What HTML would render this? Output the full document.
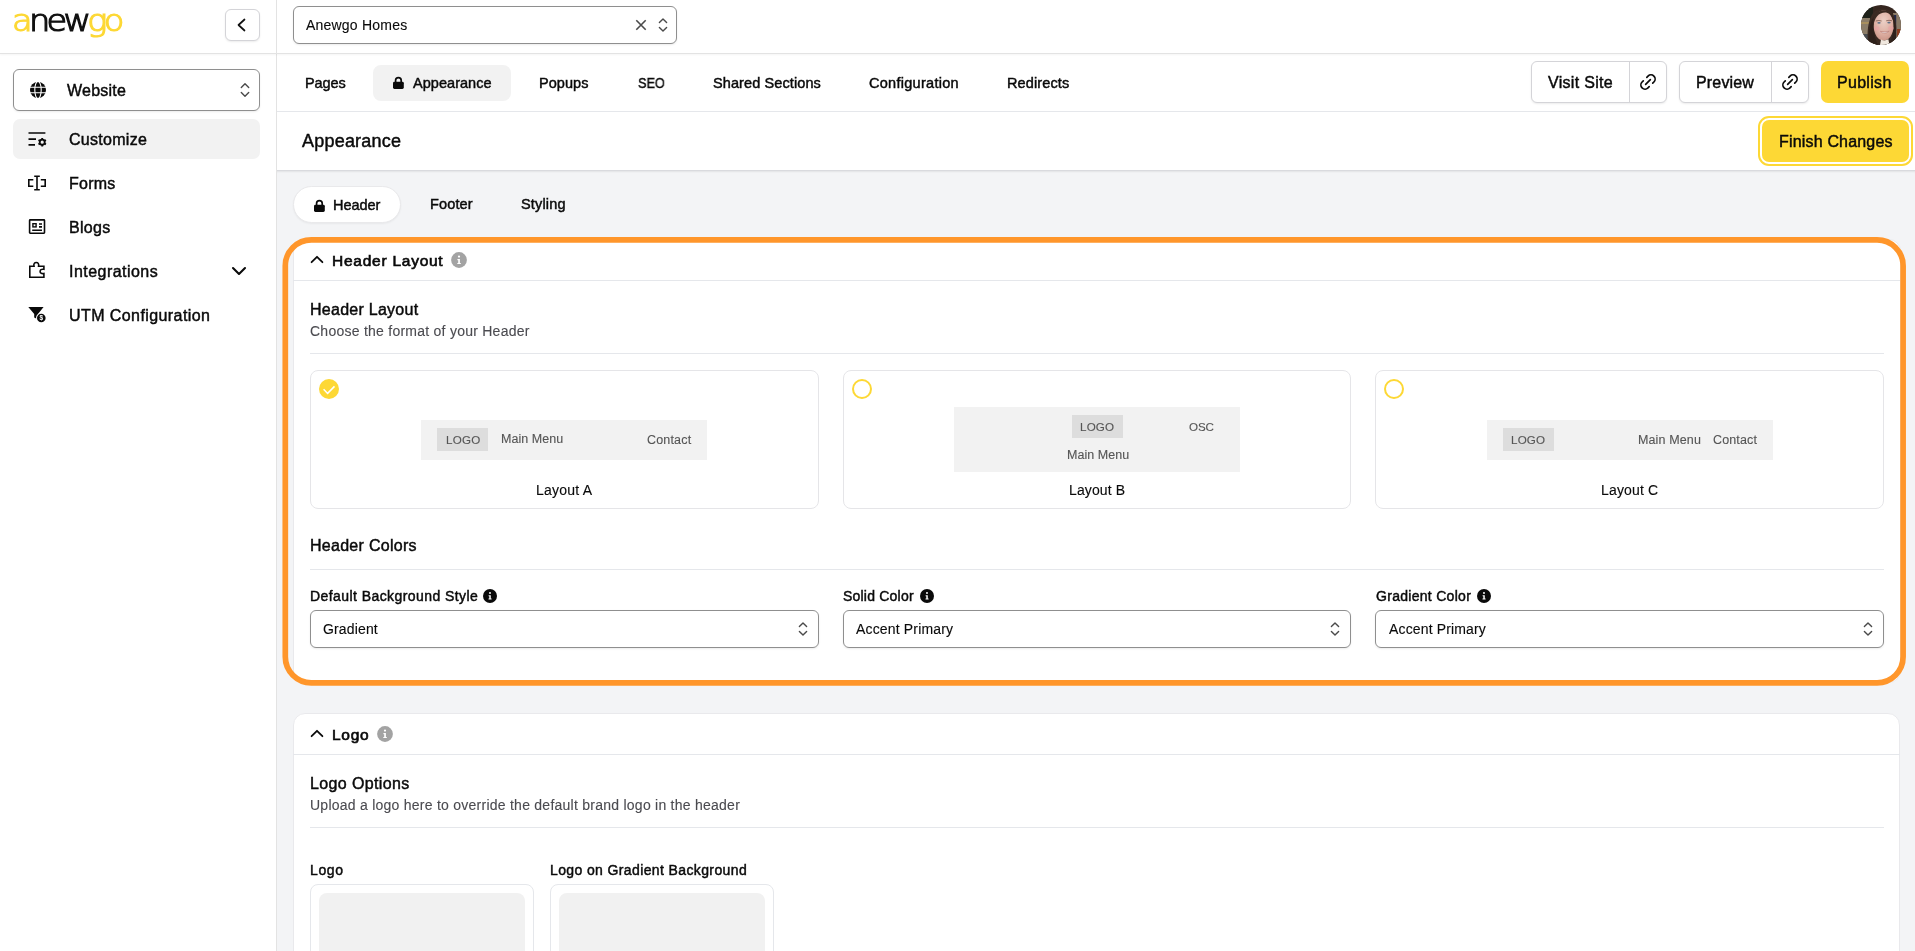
<!DOCTYPE html>
<html lang="en">
<head>
<meta charset="utf-8">
<title>Appearance</title>
<style>
*{box-sizing:border-box;margin:0;padding:0}
html,body{width:1915px;height:951px;overflow:hidden;background:#fff}
body{font-family:"Liberation Sans",sans-serif;color:#0a0a0a;font-size:15px;position:relative}
.abs{position:absolute}
.t{position:absolute;white-space:nowrap;line-height:1;will-change:transform;-webkit-text-stroke:0.12px currentColor}
.m{-webkit-text-stroke:0.45px currentColor}
.sb{-webkit-text-stroke:0.65px currentColor}
svg{position:absolute;overflow:visible}
/* structure */
#side{left:0;top:0;width:277px;height:951px;border-right:1px solid #e3e3e3;background:#fff}
#topline{left:0;top:53px;width:1915px;height:1px;background:#e3e3e3;box-shadow:0 1px 2px rgba(0,0,0,.06)}
#navline{left:277px;top:111px;width:1638px;height:1px;background:#e5e7eb}
#content{left:277px;top:170px;width:1638px;height:781px;background:#f3f4f6;border-top:1px solid #d9dade;box-shadow:inset 0 2px 2px -1px rgba(0,0,0,.07)}
.btn{position:absolute;background:#fff;border:1px solid #d4d4d8;border-radius:6px;box-shadow:0 1px 2px rgba(0,0,0,.08)}
.sel{position:absolute;background:#fff;border:1px solid #8f8f8f;border-radius:6px;box-shadow:0 1px 2px rgba(0,0,0,.08)}
.card{position:absolute;background:#fff;border-radius:12px;border:1px solid #e9e9ec}
.hr{position:absolute;height:1px;background:#e5e7eb}
.opt{position:absolute;border:1px solid #e5e5e8;border-radius:8px;background:#fff;top:370px;width:509px;height:139px}
.mock{position:absolute;background:#f2f2f2}
.lg{position:absolute;background:#dedede;color:#555;font-size:12px;text-align:center}
.mk{position:absolute;white-space:nowrap;line-height:1;color:#555;font-size:12.5px}
.rad{position:absolute;width:20px;height:20px;border-radius:50%;border:2px solid #fdd835;background:#fff}
</style>
</head>
<body>
<div id="side" class="abs"></div>
<div id="content" class="abs"></div>
<div id="topline" class="abs"></div>
<div id="navline" class="abs"></div>

<!-- SIDEBAR -->
<div id="logo" class="t" style="left:11.5px;top:1px;font-family:'DejaVu Sans Light','DejaVu Sans',sans-serif;font-weight:200;font-size:30px;letter-spacing:-3.3px;line-height:40px;-webkit-text-stroke:1.2px currentColor;transform:scaleX(1.12);transform-origin:0 0"><span style="color:#fdd835">a</span><span style="color:#111">new</span><span style="color:#fdd835">go</span></div>

<div class="btn" style="left:225px;top:9px;width:35px;height:32px"></div>
<svg style="left:236px;top:17px" width="12" height="16" viewBox="0 0 12 16"><path d="M8.5 2.5 L2.5 8 L8.5 13.5" fill="none" stroke="#111" stroke-width="1.7" stroke-linecap="round" stroke-linejoin="round"/></svg>

<div class="sel" style="left:13px;top:69px;width:247px;height:42px"></div>
<div class="t m" style="left:67px;top:83px;font-size:16px;letter-spacing:0.22px">Website</div>

<div class="abs" style="left:13px;top:119px;width:247px;height:40px;border-radius:7px;background:#f2f2f2"></div>
<div class="t m" style="left:69px;top:132px;font-size:16px;letter-spacing:0.28px">Customize</div>
<div class="t m" style="left:69px;top:176px;font-size:16px;letter-spacing:0.25px">Forms</div>
<div class="t m" style="left:69px;top:220px;font-size:16px;letter-spacing:0.29px">Blogs</div>
<div class="t m" style="left:69px;top:264px;font-size:16px;letter-spacing:0.46px">Integrations</div>
<div class="t m" style="left:69px;top:308px;font-size:16px;letter-spacing:0.42px">UTM Configuration</div>

<!-- TOP BAR -->
<div class="sel" style="left:293px;top:6px;width:384px;height:38px"></div>
<div class="t" style="left:306px;top:18px;font-size:14px;letter-spacing:0.21px">Anewgo Homes</div>

<!-- NAV -->
<div class="abs" style="left:373px;top:65px;width:138px;height:36px;border-radius:8px;background:#f2f2f2"></div>
<div class="t m" style="left:305px;top:76px;font-size:14.5px;letter-spacing:-0.11px">Pages</div>
<div class="t m" style="left:413px;top:76px;font-size:14.5px;letter-spacing:0.04px">Appearance</div>
<div class="t m" style="left:539px;top:76px;font-size:14.5px;letter-spacing:0.06px">Popups</div>
<div class="t m" style="left:637.5px;top:76px;font-size:14.5px;letter-spacing:0px;transform:scaleX(.875);transform-origin:0 0">SEO</div>
<div class="t m" style="left:713px;top:76px;font-size:14.5px;letter-spacing:0.10px">Shared Sections</div>
<div class="t m" style="left:869px;top:76px;font-size:14.5px;letter-spacing:0.28px">Configuration</div>
<div class="t m" style="left:1007px;top:76px;font-size:14.5px;letter-spacing:0.13px">Redirects</div>

<div class="btn" style="left:1531px;top:61px;width:136px;height:42px"></div>
<div class="abs" style="left:1629px;top:62px;width:1px;height:40px;background:#d4d4d8"></div>
<div class="t m" style="left:1548px;top:75px;font-size:16px;letter-spacing:0.30px">Visit Site</div>
<div class="btn" style="left:1679px;top:61px;width:130px;height:42px"></div>
<div class="abs" style="left:1771px;top:62px;width:1px;height:40px;background:#d4d4d8"></div>
<div class="t m" style="left:1696px;top:75px;font-size:16px;letter-spacing:0.16px">Preview</div>
<div class="abs" style="left:1821px;top:61px;width:88px;height:42px;border-radius:7px;background:#fdd835"></div>
<div class="t m" style="left:1837px;top:75px;font-size:16px;letter-spacing:0.30px">Publish</div>

<!-- TITLE ROW -->
<div class="t m" style="left:302px;top:132px;font-size:18px;letter-spacing:0.21px">Appearance</div>
<div class="abs" style="left:1758px;top:116px;width:155px;height:50px;border-radius:11px;border:2px solid #fdd835;background:#fff"></div>
<div class="abs" style="left:1762px;top:120px;width:147px;height:42px;border-radius:7px;background:#fdd835"></div>
<div class="t m" style="left:1779px;top:134px;font-size:16px;letter-spacing:0.18px">Finish Changes</div>

<!-- SUBTABS -->
<div class="abs" style="left:293px;top:186px;width:108px;height:37px;border-radius:19px;background:#fff;border:1px solid #e9e9eb;box-shadow:0 1px 2px rgba(0,0,0,.05)"></div>
<div class="t m" style="left:333px;top:198px;font-size:14.5px;letter-spacing:-0.06px">Header</div>
<div class="t m" style="left:430px;top:197px;font-size:14.5px;letter-spacing:0.14px">Footer</div>
<div class="t m" style="left:521px;top:197px;font-size:14.5px;letter-spacing:0.16px">Styling</div>

<!-- CARD 1 -->
<div class="card" style="left:293px;top:239px;width:1608px;height:444px"></div>
<svg style="left:0;top:0" width="1915" height="951"><rect x="285.3" y="239.8" width="1617.8" height="443" rx="26" ry="26" fill="none" stroke="#ff962b" stroke-width="5.7"/></svg>
<div class="t sb" style="left:332px;top:253px;font-size:15.5px;letter-spacing:0.75px">Header Layout</div>
<div class="hr" style="left:293px;top:280px;width:1607px"></div>
<div class="t m" style="left:310px;top:302px;font-size:16px;letter-spacing:0.26px">Header Layout</div>
<div class="t" style="left:310px;top:324px;font-size:14px;letter-spacing:0.25px;color:#4b4b50">Choose the format of your Header</div>
<div class="hr" style="left:310px;top:353px;width:1574px"></div>

<div class="opt" style="left:310px"></div>
<div class="opt" style="left:843px;width:508px"></div>
<div class="opt" style="left:1375px"></div>
<!-- layout A -->
<div class="mock" style="left:421px;top:420px;width:286px;height:40px"></div>
<div class="mock" style="left:437px;top:428px;width:51px;height:23px;background:#dddddd"></div>
<div class="t" style="left:446px;top:434px;font-size:11.6px;letter-spacing:0.25px;color:#555">LOGO</div>
<div class="t" style="left:501px;top:433px;font-size:12.5px;letter-spacing:0.05px;color:#555">Main Menu</div>
<div class="t" style="left:647px;top:434px;font-size:12.5px;letter-spacing:0.17px;color:#555">Contact</div>
<div class="t" style="left:536px;top:483px;font-size:14px;letter-spacing:0.23px">Layout A</div>
<!-- layout B -->
<div class="mock" style="left:954px;top:407px;width:286px;height:65px"></div>
<div class="mock" style="left:1072px;top:415px;width:51px;height:23px;background:#dddddd"></div>
<div class="t" style="left:1080px;top:421px;font-size:11.6px;letter-spacing:0.2px;color:#555">LOGO</div>
<div class="t" style="left:1189px;top:421px;font-size:11.6px;letter-spacing:-0.1px;color:#555">OSC</div>
<div class="t" style="left:1067px;top:449px;font-size:12.5px;letter-spacing:0.04px;color:#555">Main Menu</div>
<div class="t" style="left:1069px;top:483px;font-size:14px;letter-spacing:0.11px">Layout B</div>
<!-- layout C -->
<div class="mock" style="left:1487px;top:420px;width:286px;height:40px"></div>
<div class="mock" style="left:1503px;top:428px;width:51px;height:23px;background:#dddddd"></div>
<div class="t" style="left:1511px;top:434px;font-size:11.6px;letter-spacing:0.2px;color:#555">LOGO</div>
<div class="t" style="left:1638px;top:434px;font-size:12.5px;letter-spacing:0.13px;color:#555">Main Menu</div>
<div class="t" style="left:1713px;top:434px;font-size:12.5px;letter-spacing:0.13px;color:#555">Contact</div>
<div class="t" style="left:1601px;top:483px;font-size:14px;letter-spacing:0.17px">Layout C</div>

<div class="t m" style="left:310px;top:538px;font-size:16px;letter-spacing:0.28px">Header Colors</div>
<div class="hr" style="left:310px;top:569px;width:1574px"></div>

<div class="t m" style="left:310px;top:589px;font-size:14px;letter-spacing:0.43px">Default Background Style</div>
<div class="t m" style="left:843px;top:589px;font-size:14px;letter-spacing:0.21px">Solid Color</div>
<div class="t m" style="left:1376px;top:589px;font-size:14px;letter-spacing:0.29px">Gradient Color</div>
<div class="sel" style="left:310px;top:610px;width:509px;height:38px"></div>
<div class="sel" style="left:843px;top:610px;width:508px;height:38px"></div>
<div class="sel" style="left:1375px;top:610px;width:509px;height:38px"></div>
<div class="t" style="left:323px;top:622px;font-size:14px;letter-spacing:0.15px">Gradient</div>
<div class="t" style="left:856px;top:622px;font-size:14px;letter-spacing:0.16px">Accent Primary</div>
<div class="t" style="left:1389px;top:622px;font-size:14px;letter-spacing:0.15px">Accent Primary</div>

<!-- CARD 2 -->
<div class="card" style="left:293px;top:713px;width:1607px;height:300px"></div>
<div class="t sb" style="left:332px;top:727px;font-size:15.5px;letter-spacing:0.75px">Logo</div>
<div class="hr" style="left:293px;top:754px;width:1607px"></div>
<div class="t m" style="left:310px;top:776px;font-size:16px;letter-spacing:0.38px">Logo Options</div>
<div class="t" style="left:310px;top:798px;font-size:14px;letter-spacing:0.25px;color:#4b4b50">Upload a logo here to override the default brand logo in the header</div>
<div class="hr" style="left:310px;top:827px;width:1574px"></div>
<div class="t m" style="left:310px;top:863px;font-size:14px;letter-spacing:0.62px">Logo</div>
<div class="t m" style="left:550px;top:863px;font-size:14px;letter-spacing:0.38px">Logo on Gradient Background</div>
<div class="abs" style="left:310px;top:884px;width:224px;height:100px;border:1px solid #e5e7eb;border-radius:8px;background:#fff"></div>
<div class="abs" style="left:319px;top:893px;width:206px;height:100px;border-radius:8px;background:#f1f1f1"></div>
<div class="abs" style="left:550px;top:884px;width:224px;height:100px;border:1px solid #e5e7eb;border-radius:8px;background:#fff"></div>
<div class="abs" style="left:559px;top:893px;width:206px;height:100px;border-radius:8px;background:#f1f1f1"></div>


<!-- ICONS -->
<!-- website select: globe + updown -->
<svg style="left:30px;top:82px" width="16" height="16" viewBox="0 0 16 16"><circle cx="8" cy="8" r="8" fill="#0a0a0a"/><g fill="none" stroke="#fff" stroke-width="1.1"><path d="M0 5.3H16M0 10.7H16"/><ellipse cx="8" cy="8" rx="3.2" ry="8.6"/></g></svg>
<svg style="left:240.2px;top:82px" width="10" height="16" viewBox="0 0 10 16"><path d="M1.3 5.5 L5 1.8 L8.7 5.5 M1.3 10.5 L5 14.2 L8.7 10.5" fill="none" stroke="#4a4a4a" stroke-width="1.4" stroke-linecap="round" stroke-linejoin="round"/></svg>
<!-- customize -->
<svg style="left:28px;top:131px" width="19" height="16" viewBox="0 0 19 16"><g fill="none" stroke="#0a0a0a" stroke-width="1.7"><path d="M0.5 2H17.4M0.5 8.1H8M0.5 13.8H7"/></g><circle cx="14.2" cy="11.2" r="2.5" fill="none" stroke="#0a0a0a" stroke-width="1.8"/><g stroke="#0a0a0a" stroke-width="1.9" stroke-linecap="butt"><path d="M14.2 6.9v1.6M14.2 13.9v1.6M10.5 9.05l1.4.8M16.5 12.55l1.4.8M10.5 13.35l1.4-.8M16.5 9.85l1.4-.8"/></g></svg>
<!-- forms -->
<svg style="left:27px;top:174px" width="20" height="18" viewBox="0 0 20 18"><g fill="none" stroke="#0a0a0a" stroke-width="1.6"><path d="M10 2.2V15.8M7.2 2.2H12.8M7.2 15.8H12.8M6.3 5.8H1.8V12.2H6.3M13.8 5.8H18.2V12.2H13.8"/></g></svg>
<!-- blogs -->
<svg style="left:28px;top:218px" width="18" height="17" viewBox="0 0 18 17"><g fill="none" stroke="#0a0a0a" stroke-width="1.6"><rect x="1.6" y="1.9" width="14.9" height="13.3" rx="0.6"/><path d="M11 6H14M11 8.9H14M4.2 12.2H14"/></g><rect x="4.2" y="5" width="4.6" height="4.6" fill="#0a0a0a"/><rect x="5.6" y="6.4" width="1.8" height="1.8" fill="#fff"/></svg>
<!-- integrations puzzle -->
<svg style="left:28px;top:261px" width="18" height="18" viewBox="0 0 18 18"><path d="M1.8 16.3V5.2H6C5.4 2.6 6.6 1.5 8.3 1.5C9.9 1.5 11.1 2.6 10.6 5.2H15.9V8.3C13.2 7.9 12.1 9 12.1 10.4C12.1 11.8 13.2 12.9 15.9 12.5V16.3Z" fill="none" stroke="#0a0a0a" stroke-width="1.6" stroke-linejoin="miter"/></svg>
<svg style="left:231px;top:265px" width="16" height="12" viewBox="0 0 16 12"><path d="M2 3 L8 9 L14 3" fill="none" stroke="#0a0a0a" stroke-width="2.1" stroke-linecap="round" stroke-linejoin="round"/></svg>
<!-- utm funnel -->
<svg style="left:28px;top:306px" width="20" height="18" viewBox="0 0 20 18"><path d="M0.3 1H15.6L10 8V13.5L6.2 11.5V8Z" fill="#0a0a0a"/><circle cx="13.3" cy="12" r="5.3" fill="#fff"/><circle cx="13.3" cy="12" r="4.3" fill="#0a0a0a"/><text x="13.3" y="14.4" font-size="6.5" font-weight="bold" fill="#fff" text-anchor="middle" font-family="Liberation Sans, sans-serif">$</text></svg>
<!-- top select x + updown -->
<svg style="left:635px;top:19px" width="12" height="12" viewBox="0 0 12 12"><path d="M1.3 1.3L10.7 10.7M10.7 1.3L1.3 10.7" fill="none" stroke="#4a4a4a" stroke-width="1.6"/></svg>
<svg style="left:658px;top:17px" width="10" height="16" viewBox="0 0 10 16"><path d="M1.4 5.5 L5 1.9 L8.6 5.5 M1.4 10.5 L5 14.1 L8.6 10.5" fill="none" stroke="#4a4a4a" stroke-width="1.4" stroke-linecap="round" stroke-linejoin="round"/></svg>
<!-- nav lock -->
<svg style="left:392px;top:76px" width="13" height="14" viewBox="0 0 13 14"><path d="M3.6 6.5V4.3C3.6 2.6 4.9 1.6 6.4 1.6C7.9 1.6 9.2 2.6 9.2 4.3V6.5" fill="none" stroke="#0a0a0a" stroke-width="1.7"/><rect x="1" y="5.8" width="10.8" height="7.1" rx="1.4" fill="#0a0a0a"/></svg>
<!-- link icons -->
<svg style="left:1638px;top:72px" width="20" height="20" viewBox="0 0 24 24"><g transform="rotate(-45 12 12)" fill="none" stroke="#0a0a0a" stroke-width="2" stroke-linecap="round" stroke-linejoin="round"><path d="M9 17H7A5 5 0 0 1 7 7h2"/><path d="M15 7h2a5 5 0 1 1 0 10h-2"/><line x1="8" x2="16" y1="12" y2="12"/></g></svg>
<svg style="left:1780px;top:72px" width="20" height="20" viewBox="0 0 24 24"><g transform="rotate(-45 12 12)" fill="none" stroke="#0a0a0a" stroke-width="2" stroke-linecap="round" stroke-linejoin="round"><path d="M9 17H7A5 5 0 0 1 7 7h2"/><path d="M15 7h2a5 5 0 1 1 0 10h-2"/><line x1="8" x2="16" y1="12" y2="12"/></g></svg>
<!-- subtab lock -->
<svg style="left:313px;top:199px" width="13" height="14" viewBox="0 0 13 14"><path d="M3.6 6.5V4.3C3.6 2.6 4.9 1.6 6.4 1.6C7.9 1.6 9.2 2.6 9.2 4.3V6.5" fill="none" stroke="#0a0a0a" stroke-width="1.7"/><rect x="1" y="5.8" width="10.8" height="7.1" rx="1.4" fill="#0a0a0a"/></svg>
<!-- card chevrons + info -->
<svg style="left:310px;top:254px" width="14" height="11" viewBox="0 0 14 11"><path d="M1.6 8.2 L7 2.8 L12.4 8.2" fill="none" stroke="#0a0a0a" stroke-width="1.8" stroke-linecap="round" stroke-linejoin="round"/></svg>
<svg style="left:310px;top:728px" width="14" height="11" viewBox="0 0 14 11"><path d="M1.6 8.2 L7 2.8 L12.4 8.2" fill="none" stroke="#0a0a0a" stroke-width="1.8" stroke-linecap="round" stroke-linejoin="round"/></svg>
<svg style="left:451px;top:252px" width="16" height="16" viewBox="0 0 16 16"><circle cx="8" cy="8" r="7.9" fill="#a3a3a3"/><circle cx="8" cy="4.6" r="1.1" fill="#fff"/><path d="M6.4 7.1H8.9V10.9H9.8V12.1H6.3V10.9H7.2V8.3H6.4Z" fill="#fff"/></svg>
<svg style="left:377px;top:726px" width="16" height="16" viewBox="0 0 16 16"><circle cx="8" cy="8" r="7.9" fill="#a3a3a3"/><circle cx="8" cy="4.6" r="1.1" fill="#fff"/><path d="M6.4 7.1H8.9V10.9H9.8V12.1H6.3V10.9H7.2V8.3H6.4Z" fill="#fff"/></svg>
<!-- black info icons -->
<svg style="left:483px;top:589px" width="14" height="14" viewBox="0 0 16 16"><circle cx="8" cy="8" r="8" fill="#0a0a0a"/><circle cx="8" cy="4.6" r="1.1" fill="#fff"/><path d="M6.4 7.1H8.9V10.9H9.8V12.1H6.3V10.9H7.2V8.3H6.4Z" fill="#fff"/></svg>
<svg style="left:920px;top:589px" width="14" height="14" viewBox="0 0 16 16"><circle cx="8" cy="8" r="8" fill="#0a0a0a"/><circle cx="8" cy="4.6" r="1.1" fill="#fff"/><path d="M6.4 7.1H8.9V10.9H9.8V12.1H6.3V10.9H7.2V8.3H6.4Z" fill="#fff"/></svg>
<svg style="left:1477px;top:589px" width="14" height="14" viewBox="0 0 16 16"><circle cx="8" cy="8" r="8" fill="#0a0a0a"/><circle cx="8" cy="4.6" r="1.1" fill="#fff"/><path d="M6.4 7.1H8.9V10.9H9.8V12.1H6.3V10.9H7.2V8.3H6.4Z" fill="#fff"/></svg>
<!-- select updowns -->
<svg style="left:798px;top:621px" width="10" height="16" viewBox="0 0 10 16"><path d="M1.4 5.5 L5 1.9 L8.6 5.5 M1.4 10.5 L5 14.1 L8.6 10.5" fill="none" stroke="#4a4a4a" stroke-width="1.4" stroke-linecap="round" stroke-linejoin="round"/></svg>
<svg style="left:1330px;top:621px" width="10" height="16" viewBox="0 0 10 16"><path d="M1.4 5.5 L5 1.9 L8.6 5.5 M1.4 10.5 L5 14.1 L8.6 10.5" fill="none" stroke="#4a4a4a" stroke-width="1.4" stroke-linecap="round" stroke-linejoin="round"/></svg>
<svg style="left:1863px;top:621px" width="10" height="16" viewBox="0 0 10 16"><path d="M1.4 5.5 L5 1.9 L8.6 5.5 M1.4 10.5 L5 14.1 L8.6 10.5" fill="none" stroke="#4a4a4a" stroke-width="1.4" stroke-linecap="round" stroke-linejoin="round"/></svg>
<!-- radios -->
<div class="abs" style="left:319px;top:379px;width:20px;height:20px;border-radius:50%;background:#fdd835"></div>
<svg style="left:319px;top:379px" width="20" height="20" viewBox="0 0 20 20"><path d="M4.6 10.3 L8.6 14.4 L15.5 7.4" fill="none" stroke="#fff" stroke-width="1.5"/></svg>
<div class="rad" style="left:852px;top:379px"></div>
<div class="rad" style="left:1384px;top:379px"></div>
<!-- avatar -->
<svg style="left:1861px;top:5px" width="40" height="40" viewBox="0 0 40 40">
<defs><clipPath id="avc"><circle cx="20" cy="20" r="20"/></clipPath>
<radialGradient id="avf" cx="0.5" cy="0.35" r="0.7"><stop offset="0" stop-color="#ecd0c6"/><stop offset="0.6" stop-color="#deb0a3"/><stop offset="1" stop-color="#c99284"/></radialGradient></defs>
<g clip-path="url(#avc)">
<rect width="40" height="40" fill="#35261f"/>
<rect x="0" y="0" width="12" height="14" fill="#1e2119"/>
<rect x="0" y="13" width="9" height="16" fill="#8c7d68"/>
<rect x="0" y="17" width="8" height="2" fill="#a88f5e"/>
<rect x="0" y="29" width="8" height="6" fill="#4a4e52"/>
<rect x="32" y="8" width="8" height="26" fill="#8a7a66"/>
<rect x="33" y="10" width="2.2" height="16" fill="#252a4a"/>
<rect x="36" y="24" width="4" height="10" fill="#8a3a1e"/>
<path d="M8 40 C5 30 7 12 14 6 C18 2.5 26 2.5 30 6 C36 12 37 30 33 40Z" fill="#3a2a22"/>
<ellipse cx="22.6" cy="20.6" rx="10" ry="15" fill="url(#avf)"/>
<path d="M12.2 22 C11 12 15 5.6 22.5 5.2 C29.5 5 34 11 33 22 C32.4 13 29.5 8 25 7.4 C18 7 13.4 12 12.2 22Z" fill="#3a2a22"/>
<path d="M8 40 C7 30 8.5 18 12.6 12 C11.6 20 12.2 30 17 40Z" fill="#2e211b"/>
<path d="M35 40 C36 32 35 20 32.6 13 C33.4 22 32.4 31 28 40Z" fill="#2e211b"/>
<ellipse cx="18" cy="17.8" rx="1.7" ry="0.9" fill="#5b7088"/>
<ellipse cx="28" cy="17.6" rx="1.7" ry="0.9" fill="#5b7088"/>
<path d="M14.8 16 Q18 15 20.6 16 M25.2 15.8 Q28 14.8 31 15.8" stroke="#6b4a3e" stroke-width="0.7" fill="none"/>
<ellipse cx="15.8" cy="23.5" rx="2.8" ry="2.2" fill="#eaa0a4" opacity=".55"/>
<ellipse cx="30" cy="23.3" rx="2.8" ry="2.2" fill="#eaa0a4" opacity=".55"/>
<path d="M19.4 26.4 Q23.6 30.2 28.2 26.2 Q23.8 27.6 19.4 26.4Z" fill="#f1eaea" stroke="#b87a72" stroke-width="0.6"/>
<path d="M19 40 L20 34.5 Q23.5 36.5 27.4 34.3 L28.4 40Z" fill="#f0e8df"/>
</g></svg>
</body>
</html>
